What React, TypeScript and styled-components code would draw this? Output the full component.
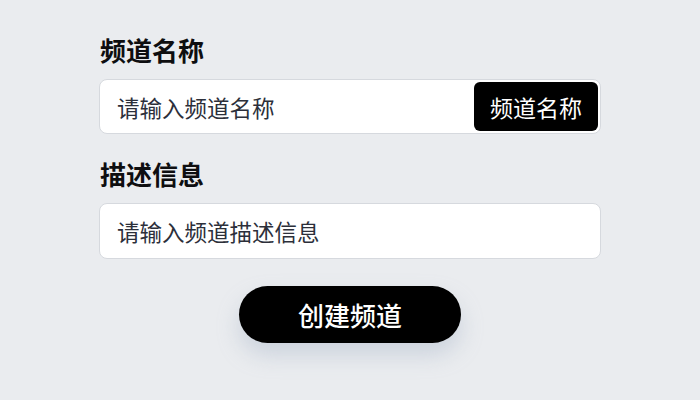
import React from "react";
import styled, { createGlobalStyle } from "styled-components";

const GlobalStyle = createGlobalStyle`
  html, body {
    margin: 0;
    padding: 0;
    background: #eaecef;
  }
  body {
    font-family: "Noto Sans CJK SC", "Noto Sans", sans-serif;
  }
`;

const Page = styled.div`
  width: 700px;
  height: 400px;
  background: #eaecef;
  display: flex;
  justify-content: center;
  box-sizing: border-box;
  padding-top: 33px;
`;

const Form = styled.div`
  width: 502px;
  display: flex;
  flex-direction: column;
`;

const Field = styled.div<{ $gapAfter?: number }>`
  display: flex;
  flex-direction: column;
  gap: 12px;
  margin-bottom: ${(p) => p.$gapAfter ?? 0}px;
`;

const Label = styled.div`
  font-size: 26px;
  line-height: 34px;
  font-weight: 700;
  color: #0e0e10;
  padding-left: 1px;
`;

const InputBox = styled.div<{ $height: number }>`
  height: ${(p) => p.$height}px;
  box-sizing: border-box;
  background: #ffffff;
  border: 1px solid #d6d9de;
  border-radius: 8px;
  display: flex;
  align-items: center;
  padding: 2px 2px 2px 17px;
`;

const Placeholder = styled.span`
  flex: 1;
  font-size: 22.5px;
  color: #2c2f3a;
`;

const InlineButton = styled.button`
  height: 100%;
  width: 124px;
  border: none;
  border-radius: 6px;
  background: #000000;
  color: #ffffff;
  font-family: inherit;
  font-size: 23px;
  padding: 0;
`;

const SubmitButton = styled.button`
  align-self: center;
  margin-top: 27px;
  width: 222px;
  height: 57px;
  border: none;
  border-radius: 29px;
  background: #000000;
  color: #ffffff;
  font-family: inherit;
  font-size: 26px;
  font-weight: 500;
  box-shadow: 0 12px 22px rgba(150, 165, 190, 0.35);
`;

export default function App() {
  return (
    <>
      <GlobalStyle />
      <Page>
        <Form>
          <Field $gapAfter={23}>
            <Label>频道名称</Label>
            <InputBox $height={55}>
              <Placeholder>请输入频道名称</Placeholder>
              <InlineButton>频道名称</InlineButton>
            </InputBox>
          </Field>
          <Field>
            <Label>描述信息</Label>
            <InputBox $height={56}>
              <Placeholder>请输入频道描述信息</Placeholder>
            </InputBox>
          </Field>
          <SubmitButton>创建频道</SubmitButton>
        </Form>
      </Page>
    </>
  );
}
